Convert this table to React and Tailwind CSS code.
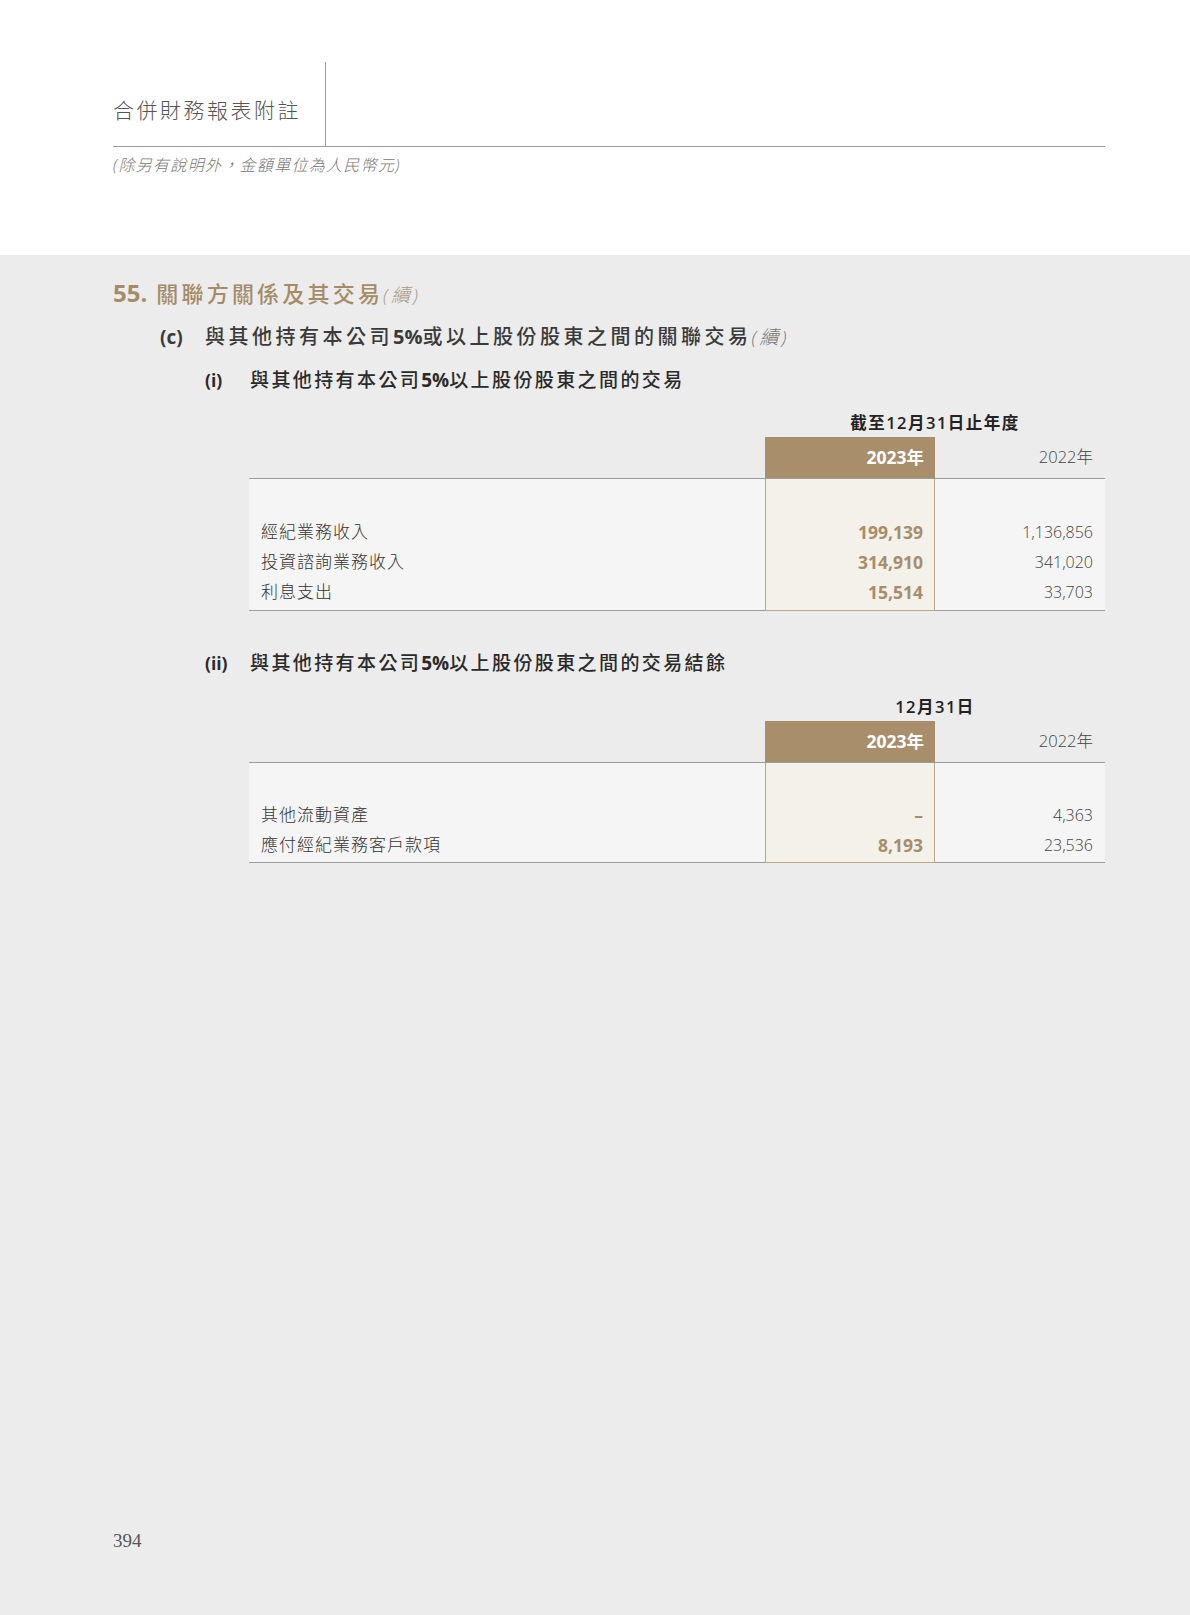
import React from 'react';

const FONT = "font-['Open_Sans','Noto_Sans_CJK_TC',sans-serif]";

const Table = ({ caption, rows, pt = 'pt-[37px]', pb = 'pb-[4px]' }) => (
  <div className="ml-[136px] w-[856px]">
    <div className="flex">
      <div className="flex-1" />
      <div className="w-[340px] text-center text-[16.5px] leading-[22px] font-semibold text-[#222] tracking-[1.5px]">
        {caption}
      </div>
    </div>
    <div className="mt-[3px] flex h-[41px]">
      <div className="flex-1" />
      <div className="w-[170px] bg-[#a88e6b] flex items-center justify-end pr-[11px] text-[17.5px] font-bold text-white">
        2023年
      </div>
      <div className="w-[170px] flex items-center justify-end pr-[12px] text-[16.5px] font-light text-[#444]">
        2022年
      </div>
    </div>
    <div className="flex bg-[#f5f5f5] border-t border-[#9c9c9c]">
      <div className={`flex-1 ${pt} ${pb} pl-[12px] border-b border-[#9c9c9c]`}>
        {rows.map((r) => (
          <div key={r[0]} className="h-[30px] flex items-center text-[17px] font-light text-[#333] tracking-[1px]">
            {r[0]}
          </div>
        ))}
      </div>
      <div className={`w-[170px] ${pt} ${pb} pr-[11px] bg-[#f4f0ea] border-x border-b border-[#b9a88e]`}>
        {rows.map((r) => (
          <div key={r[0]} className="h-[30px] flex items-center justify-end text-[17.5px] font-bold text-[#a68e6b]">
            {r[1]}
          </div>
        ))}
      </div>
      <div className={`w-[170px] ${pt} ${pb} pr-[12px] border-b border-[#9c9c9c]`}>
        {rows.map((r) => (
          <div key={r[0]} className="h-[30px] flex items-center justify-end text-[16px] font-light text-[#444]">
            {r[2]}
          </div>
        ))}
      </div>
    </div>
  </div>
);

const SubHeading = ({ label, children, className = '' }) => (
  <div className={`ml-[92px] flex text-[19px] leading-[26px] text-[#2a2a2a] ${className}`}>
    <span className="w-[45px] font-bold text-[17.5px]">{label}</span>
    <span className="font-medium tracking-[2.4px]">{children}</span>
  </div>
);

const App = () => {
  return (
    <div className={`w-[1190px] min-h-[1615px] bg-[#ececec] ${FONT}`}>
      <header className="bg-white h-[255px] pl-[113px] pr-[85px] pt-[62px]">
        <div className="flex h-[85px] border-b border-[#9a9a9a]">
          <div className="w-[212px] pt-[35px]">
            <h1 className="text-[21px] leading-[26px] font-light tracking-[2.5px] text-[#555]">
              合併財務報表附註
            </h1>
          </div>
          <div className="border-l border-[#9a9a9a]" />
        </div>
        <p className="mt-[6px] text-[16px] leading-[24px] italic font-light tracking-[1.3px] text-[#777]">
          (除另有說明外，金額單位為人民幣元)
        </p>
      </header>

      <main className="h-[1360px] flex flex-col pl-[113px] pr-[85px] pt-[23px] pb-[62px]">
        <h2 className="text-[22px] leading-[30px] text-[#a58c69]">
          <span className="font-bold text-[24px] mr-[9px]">55.</span>
          <span className="font-medium tracking-[3.2px]">關聯方關係及其交易</span>
          <span className="italic font-light text-[19px] text-[#a89a86] tracking-[3px]">(續)</span>
        </h2>

        <div className="mt-[13px] ml-[47px] flex text-[20px] leading-[28px] text-[#3a3a3a]">
          <span className="w-[45px] font-bold text-[19px]">(c)</span>
          <span className="font-medium tracking-[3.5px]">
            與其他持有本公司<span className="font-bold tracking-normal">5%</span>或以上股份股東之間的關聯交易
            <span className="italic font-light text-[19px] text-[#777] tracking-[3px]">(續)</span>
          </span>
        </div>

        <SubHeading label="(i)" className="mt-[16px]">
          與其他持有本公司<span className="font-bold tracking-normal">5%</span>以上股份股東之間的交易
        </SubHeading>

        <div className="mt-[19px]">
          <Table
            caption="截至12月31日止年度"
            pt="pt-[38px]"
            pb="pb-[3px]"
            rows={[
              ['經紀業務收入', '199,139', '1,136,856'],
              ['投資諮詢業務收入', '314,910', '341,020'],
              ['利息支出', '15,514', '33,703'],
            ]}
          />
        </div>

        <SubHeading label="(ii)" className="mt-[39px]">
          與其他持有本公司<span className="font-bold tracking-normal">5%</span>以上股份股東之間的交易結餘
        </SubHeading>

        <div className="mt-[20px]">
          <Table
            caption="12月31日"
            pb="pb-[2px]"
            rows={[
              ['其他流動資產', '–', '4,363'],
              ['應付經紀業務客戶款項', '8,193', '23,536'],
            ]}
          />
        </div>

        <div className="mt-auto text-[19px] leading-[24px] text-[#555] font-['Liberation_Serif',serif]">
          394
        </div>
      </main>
    </div>
  );
};

export default App;
